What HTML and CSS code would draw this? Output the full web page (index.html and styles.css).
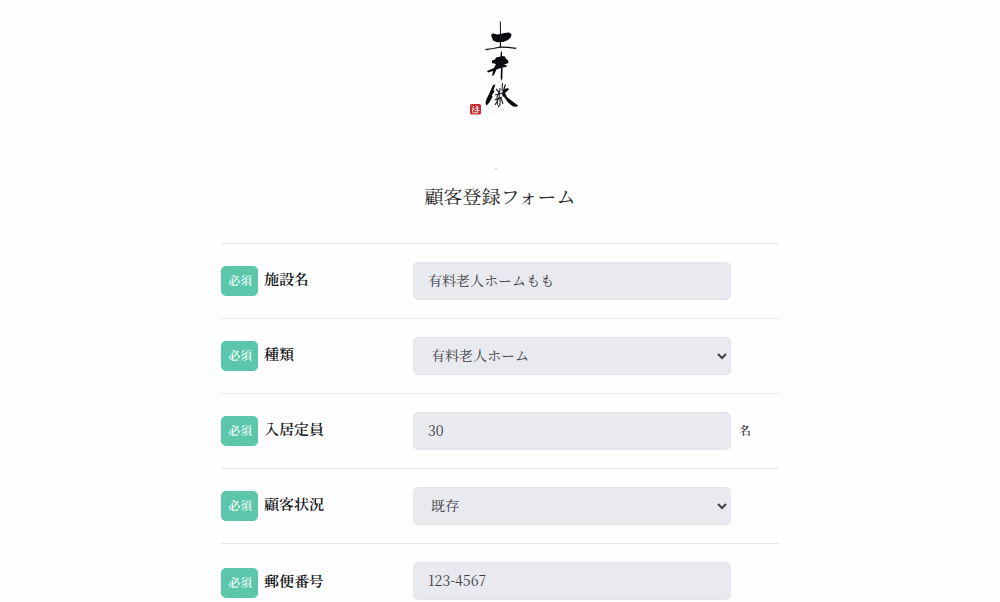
FILE: index.html
```html
<!DOCTYPE html>
<html lang="ja">
<head>
<meta charset="utf-8">
<meta name="viewport" content="width=device-width, initial-scale=1">
<title>顧客登録フォーム</title>
<link rel="stylesheet" href="styles.css">
</head>
<body>
<main class="page">
  <header class="header">
    <svg class="logo" viewBox="0 0 60 100" role="img" aria-label="土井勝">
      <g fill="#0c0c10">
        <path d="M29.8 3 30.8 4 31 15 31 29.5H29.8L30 15Z"/>
        <path d="M21 17 23 15.3 27 16.5 31 16 34 15 39 14.5 41.5 16 41 19 38 22 33 24 27 24.3 23 22.5Z"/>
        <path d="M15 31 22 30.2 30 28.6 38 28.8 46.5 29.8 46 31 38 30 30 29.8 16 32.2Z"/>
        <path d="M31 33 32 34 32 38 35 38.5 36 41 38 42 38.5 45 34 46.5 37 47.5 36 49 32.6 49.5 32.4 60 31.5 63 30.7 60 31 50 26.5 51.5 24 57 22 58 23 53 18 54.5 17 53 24 50 26 46 22 45 22 42.5 25 41.5 26 39.5 30.5 38.5Z"/>
        <path d="M23 67 25.5 66.5 23.5 72 24.5 73.5 22 77 22.5 79 19 85 16.5 87.5 15.5 85 16.5 81 19 76Z"/>
        <path d="M35 66 36 67 34.5 71 38 70 39 71.5 35 75 37 79 42 83 48 87.5 47 88.8 43 88.5 38 84.5 34.5 79.5 32.5 78 32 75Z"/>
      </g>
      <path d="M32.5 65 32 73M26 71 29 74 27 79 27.5 87M30 70 29 80 25 87M25 77 33 75M24.5 82 32 79M30 79 30 87 28 89M31 80 33 86" fill="none" stroke="#222228" stroke-width="1.1"/>
      <rect x="0" y="86" width="11" height="10.5" rx="1.5" fill="#c92e34"/>
      <path d="M3.5 88 2.5 92 3 95M2 91 5 92M7 88 5.5 90.5 9 90M7.5 88V95M5 92.5H9.5M3 95 8 94.5" fill="none" stroke="#f9dfdd" stroke-width="0.9"/>
    </svg>
    <span class="dot" aria-hidden="true"></span>
    <h1 class="title">顧客登録フォーム</h1>
  </header>

  <form class="form">
    <div class="row">
      <label class="label" for="facility"><span class="badge">必須</span><span class="name">施設名</span></label>
      <input class="field" id="facility" type="text" value="有料老人ホームもも">
    </div>
    <div class="row">
      <label class="label" for="kind"><span class="badge">必須</span><span class="name">種類</span></label>
      <select class="field field-select" id="kind"><option>有料老人ホーム</option></select>
    </div>
    <div class="row">
      <label class="label" for="capacity"><span class="badge">必須</span><span class="name">入居定員</span></label>
      <input class="field" id="capacity" type="text" inputmode="numeric" value="30">
      <span class="unit">名</span>
    </div>
    <div class="row">
      <label class="label" for="status"><span class="badge">必須</span><span class="name">顧客状況</span></label>
      <select class="field field-select" id="status"><option>既存</option></select>
    </div>
    <div class="row row-postal">
      <label class="label" for="postal"><span class="badge">必須</span><span class="name">郵便番号</span></label>
      <input class="field" id="postal" type="text" inputmode="numeric" value="123-4567">
    </div>
  </form>
</main>
</body>
</html>
```
FILE: styles.css
```css
* {
  box-sizing: border-box;
}

body {
  margin: 0;
  background: #fefefe;
  color: #1e1e22;
  font-family: "Noto Serif JP", "Noto Serif CJK JP", "Liberation Serif", "Noto Sans CJK JP", serif;
  font-size: 14px;
  line-height: 20px;
}

.page {
  max-width: 558px;
  margin: 0 auto;
}

.header {
  display: flex;
  flex-direction: column;
  align-items: center;
  padding: 18px 0 33px;
}

.logo {
  width: 60px;
  height: 100px;
}

.dot {
  width: 2px;
  height: 2px;
  margin: 50px 8px 11px 0;
  border-radius: 50%;
  background: #cfcfd2;
}

.title {
  margin: 0;
  font-size: 19px;
  font-weight: 400;
  line-height: 29px;
}

.row {
  display: grid;
  grid-template-columns: 192fr 318fr 48fr;
  align-items: center;
  padding: 18px 0;
  border-top: 1px solid #e4e6ea;
}

.row-postal {
  padding-bottom: 0;
}

.row-postal .label {
  padding-top: 4px;
}

.label {
  display: flex;
  align-items: center;
  gap: 6px;
  color: #111114;
  font-weight: 600;
}

.name {
  padding-bottom: 4px;
  font-size: 15px;
}

.badge {
  padding: 4px 6px 6px 7px;
  border-radius: 5px;
  background: #5bc6aa;
  color: #f4fffb;
  font-size: 12px;
}

.field {
  width: 100%;
  height: 38px;
  padding: 0 14px 3px;
  border: 1px solid #e3e4e9;
  border-radius: 5px;
  background: #e9eaf0;
  color: #3c3c42;
  font: inherit;
}

.field-select {
  padding: 0 0 2px 13px;
}

.unit {
  padding: 0 0 2px 8px;
  font-size: 12px;
  font-weight: 500;
}
```
